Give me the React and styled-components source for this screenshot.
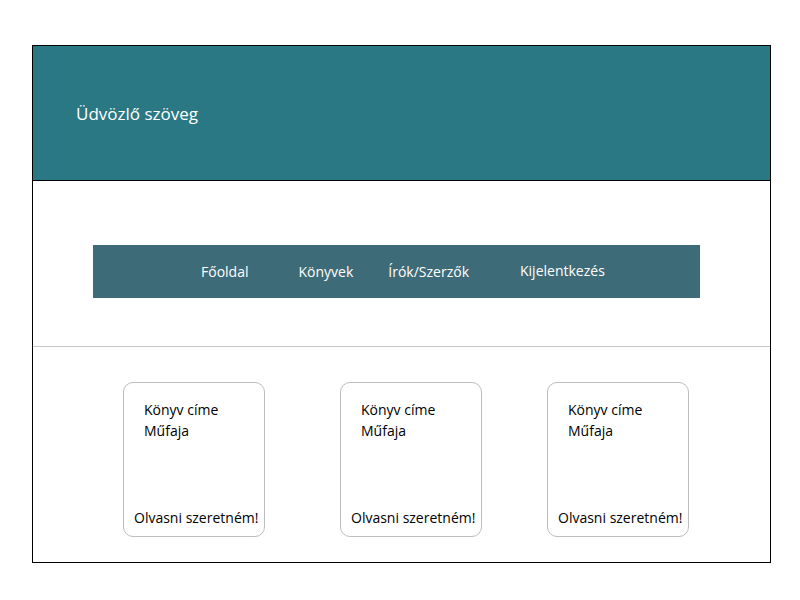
import React from 'react';
import styled, { createGlobalStyle } from 'styled-components';

const GlobalStyle = createGlobalStyle`
  body {
    margin: 0;
    background: #ffffff;
    font-family: "Open Sans", "Noto Sans", sans-serif;
  }
`;

const books = [
    { title: 'Könyv címe', genre: 'Műfaja', shift: 0 },
    { title: 'Könyv címe', genre: 'Műfaja', shift: 3 },
    { title: 'Könyv címe', genre: 'Műfaja', shift: -7 },
];

const menu = ['Főoldal', 'Könyvek', 'Írók/Szerzők', 'Kijelentkezés'];

const App = () => {
    return (
        <>
            <GlobalStyle />
            <Frame>
                <Header>
                    <Welcome>Üdvözlő szöveg</Welcome>
                </Header>
                <NavSection>
                    <NavBar>
                        {menu.map((item) => (
                            <NavItem key={item}>{item}</NavItem>
                        ))}
                    </NavBar>
                </NavSection>
                <CardRow>
                    {books.map((book, i) => (
                        <Card key={i} $shift={book.shift}>
                            <CardInfo>
                                <span>{book.title}</span>
                                <span>{book.genre}</span>
                            </CardInfo>
                            <CardAction>Olvasni szeretném!</CardAction>
                        </Card>
                    ))}
                </CardRow>
            </Frame>
        </>
    );
};

export default App;

const Frame = styled.div`
  margin: 45px 0 0 32px;
  width: 739px;
  height: 518px;
  box-sizing: border-box;
  border: 1px solid #000;
  display: flex;
  flex-direction: column;
`;

const Header = styled.header`
  height: 135px;
  box-sizing: border-box;
  background: #2b7885;
  border-bottom: 1px solid #000;
  display: flex;
  align-items: center;
  padding: 0 0 0 43px;
`;

const Welcome = styled.h1`
  margin: 0;
  font-size: 17px;
  font-weight: 400;
  color: #ffffff;
`;

const NavSection = styled.section`
  height: 166px;
  box-sizing: border-box;
  border-bottom: 1px solid #c8c8c8;
  padding: 64px 0 0 60px;
`;

const NavBar = styled.nav`
  width: 607px;
  height: 53px;
  background: #3e6b78;
  display: flex;
  align-items: center;
  padding-left: 108px;
  box-sizing: border-box;
  gap: 50px;
`;

const NavItem = styled.a`
  color: #ffffff;
  font-size: 14px;
  text-decoration: none;
  &:nth-child(3) {
    margin-left: -15px;
  }
  &:nth-child(4) {
    margin-left: 1px;
    margin-top: -3px;
  }
`;

const CardRow = styled.section`
  display: flex;
  gap: 72px;
  padding: 35px 0 0 90px;
`;

const Card = styled.div`
  width: 142px;
  height: 155px;
  box-sizing: border-box;
  margin-left: ${(p) => p.$shift}px;
  border: 1px solid #bdbdbd;
  border-radius: 10px;
  display: flex;
  flex-direction: column;
  justify-content: space-between;
  padding: 16px 0 8px 10px;
  color: #000;
  font-size: 14px;
`;

const CardInfo = styled.div`
  display: flex;
  flex-direction: column;
  padding-left: 10px;
  line-height: 21px;
`;

const CardAction = styled.span`
  line-height: 21px;
  white-space: nowrap;
`;
